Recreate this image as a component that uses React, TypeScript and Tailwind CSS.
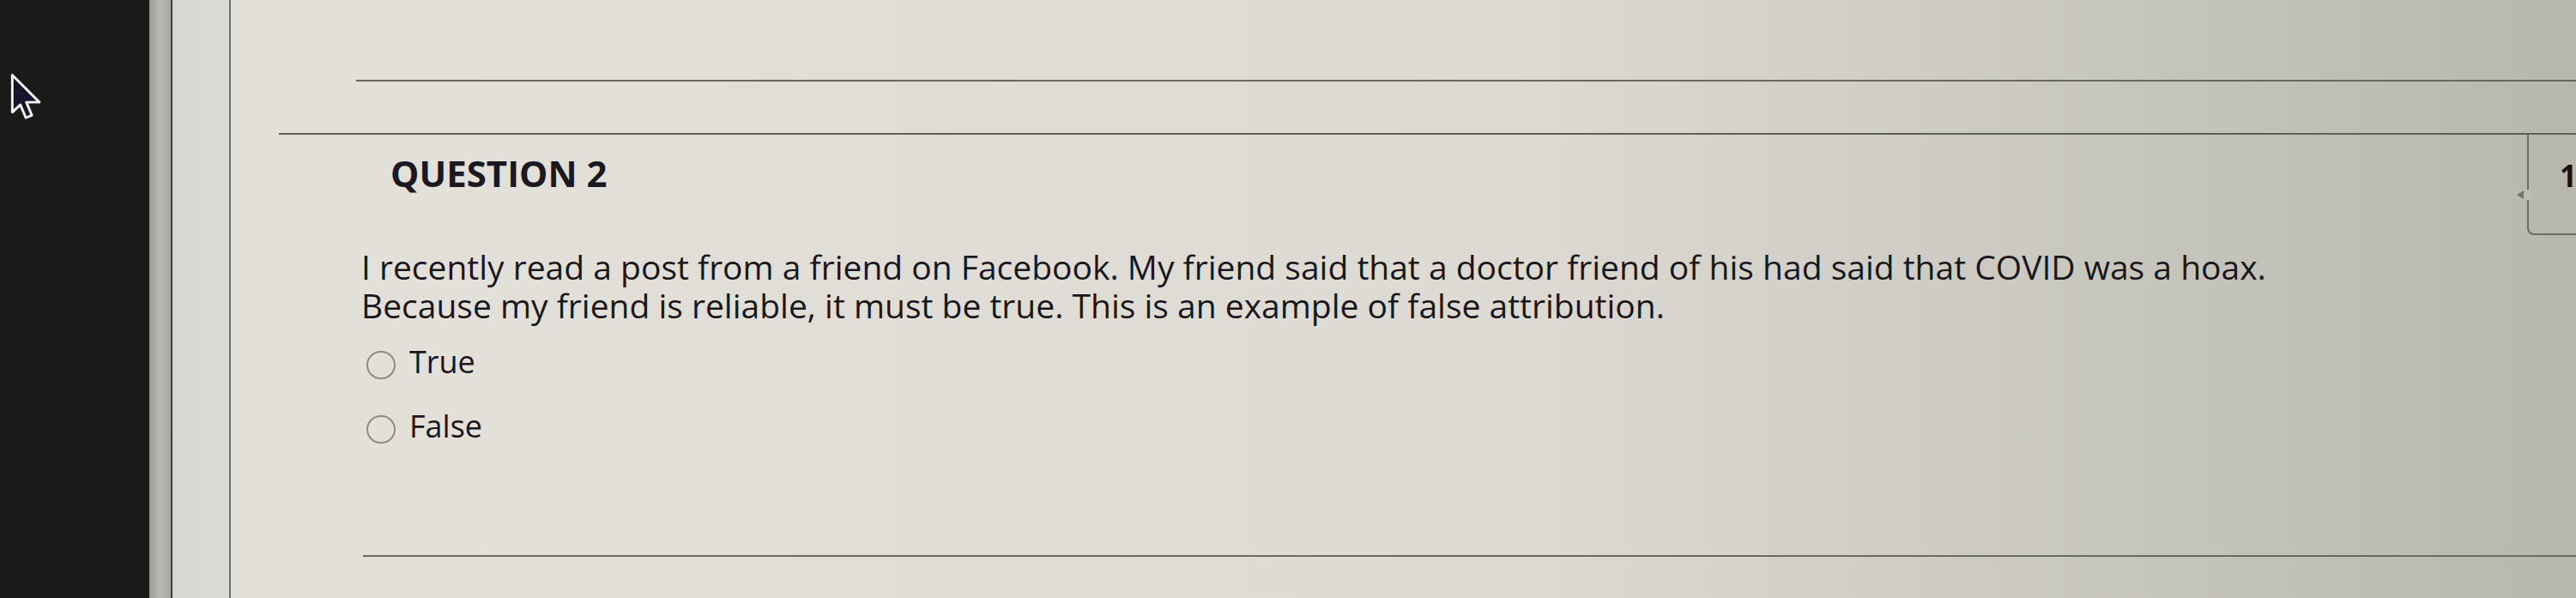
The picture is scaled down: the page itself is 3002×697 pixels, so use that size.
import React from 'react'

const font = { fontFamily: '"Open Sans", "Noto Sans", sans-serif' }

const Cursor = () => (
  <svg width="38" height="56" viewBox="0 0 13 19" className="block">
    <path
      d="M0.8 0.8 L0.8 15.6 L4 12.6 L6.2 17.8 L8.6 16.8 L6.4 11.6 L11.6 11.6 Z"
      fill="#17142b"
      stroke="#f4f4f4"
      strokeWidth="1"
      strokeLinejoin="round"
    />
  </svg>
)

const Radio = ({ label }: { label: string }) => (
  <label className="flex h-[40px] items-start gap-[16px]">
    <span className="mt-[7px] h-[33px] w-[34px] shrink-0 rounded-full border-2 border-[#8c8b86]" />
    <span className="text-[36px] font-medium leading-[40px] text-[#1a171c]">{label}</span>
  </label>
)

export default function App() {
  return (
    <div className="flex h-[697px] w-[3002px] overflow-hidden" style={font}>
      {/* dark screen edge with cursor */}
      <div className="w-[174px] shrink-0 bg-[#1b1a18] pl-[12px] pt-[85px]">
        <Cursor />
      </div>
      <div className="w-[25px] shrink-0 bg-linear-to-r from-[#9c9b97] via-[#bab9b4] to-[#a9a8a3]" />
      <div className="w-[2px] shrink-0 bg-[#3c3b38]" />
      <div className="w-[66px] shrink-0 bg-linear-to-r from-[#d7d6d0] to-[#dcdbd5]" />
      <div className="w-[2px] shrink-0 bg-[#6f6e69]" />

      {/* page */}
      <div className="flex min-w-0 flex-1 flex-col bg-linear-to-r from-[#e2e0d9] from-10% via-[#dcdad2] via-55% to-[#b8b7ae]">
        <div className="ml-[146px] mt-[93px] h-[2px] bg-[#686762]" />
        <div className="ml-[56px] mt-[60px] h-[2px] bg-[#5f5e59]" />

        <div className="flex">
          <div className="flex min-w-0 flex-1 flex-col">
            <h2 className="ml-[186px] mt-[16px] text-[42px] font-bold leading-[58px] text-[#1b1820]">QUESTION 2</h2>
            <p className="ml-[152px] mt-[57px] text-[39px] font-medium leading-[45px] text-[#1a171c]">
              I recently read a post from a friend on Facebook. My friend said that a doctor friend of his had said that COVID was a hoax.
              <br />
              Because my friend is reliable, it must be true. This is an example of false attribution.
            </p>
            <div className="ml-[158px] mt-[24px] flex flex-col gap-[35px]">
              <Radio label="True" />
              <Radio label="False" />
            </div>
          </div>

          {/* points box */}
          <div className="relative h-[117px] w-[57px] shrink-0 rounded-bl-[8px] border-b-2 border-l-2 border-[#6d6c66] pl-[36px] pt-[28px]">
            <span className="text-[35px] font-bold leading-[40px] text-[#141216]">1</span>
            <span className="absolute left-[-16px] top-[64px] flex h-[12px] w-[18px] items-center bg-[#bdbcb3]">
              <span className="ml-[2px] h-0 w-0 border-y-[5px] border-r-[8px] border-y-transparent border-r-[#74736d]" />
            </span>
          </div>
        </div>

        <div className="ml-[154px] mt-[130px] h-[2px] bg-[#6a6964]" />
      </div>
    </div>
  )
}
